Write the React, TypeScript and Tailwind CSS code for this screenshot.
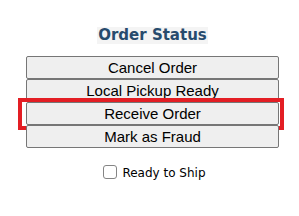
import React from 'react';

const actions = ['Cancel Order', 'Local Pickup Ready', 'Receive Order', 'Mark as Fraud'];

export default function App() {
  return (
    <div className="w-[299px] h-[216px] bg-white pl-[26px] pr-[20px] pt-[27px]">
      <div className="flex flex-col items-center">
        {/* Heading */}
        <h2
          className="bg-[#f4f4f4] px-[1px] text-[15px] leading-[17px] font-bold text-[#274b6d]"
          style={{ fontFamily: '"DejaVu Sans", Verdana, sans-serif' }}
        >
          Order Status
        </h2>

        {/* Action buttons */}
        <div className="mt-[12px] w-full flex flex-col">
          {actions.map((label) => (
            <div key={label} className="relative">
              <button
                className="block w-full h-[23px] bg-[#efefef] border border-[#767676] rounded-[2px] text-[15px] leading-[20px] text-black"
                style={{ fontFamily: '"Liberation Sans", Arial, sans-serif' }}
              >
                {label}
              </button>
              {label === 'Receive Order' && (
                <span className="absolute left-[-8px] top-[-4px] w-[266px] h-[32px] border-4 border-[#e31e24] pointer-events-none" />
              )}
            </div>
          ))}
        </div>

        {/* Ready to ship */}
        <label
          className="mt-[15px] ml-[4px] flex items-center gap-[5px] text-[12px] leading-[15px] text-black"
          style={{ fontFamily: '"DejaVu Sans", Verdana, sans-serif' }}
        >
          <span className="w-[14px] h-[14px] border border-[#858585] rounded-[3px] bg-white" />
          <span className="pt-[3px]">Ready to Ship</span>
        </label>
      </div>
    </div>
  );
}
